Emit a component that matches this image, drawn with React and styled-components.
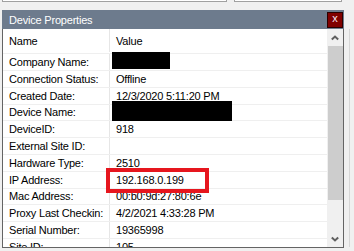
import React from "react";
import styled, { createGlobalStyle } from "styled-components";

const GlobalStyle = createGlobalStyle`
  html, body { margin: 0; padding: 0; background: #f0f0f0; }
  body {
    font-family: "Liberation Sans", Arial, sans-serif;
    font-size: 11px;
    letter-spacing: -0.2px;
    color: #000;
    overflow: hidden;
  }
`;

const Page = styled.div`
  width: 354px;
  height: 251px;
  display: flex;
  flex-direction: column;
  overflow: hidden;
`;

const TopStrip = styled.div`
  display: flex;
  gap: 7px;
  padding-left: 2px;
  height: 2px;
`;

const InputStub = styled.div`
  width: ${(p) => p.$w}px;
  height: 2px;
  box-sizing: border-box;
  background: #fff;
  border: 1px solid #a0a0a0;
  border-top: none;
`;

const Main = styled.div`
  display: flex;
  margin-top: 8px;
  padding-left: 2px;
`;

const Panel = styled.div`
  width: 342px;
  height: 238px;
  box-sizing: border-box;
  border: 1px solid #646464;
  border-top: none;
  display: flex;
  flex-direction: column;
  background: #fff;
`;

const TitleBar = styled.div`
  height: 19px;
  flex-shrink: 0;
  background: #6d7b8d;
  display: flex;
  align-items: center;
  justify-content: space-between;
  color: #fff;
  padding-left: 6px;
  margin: 0 -1px 0 -1px;
  padding-right: 1px;
`;

const TitleText = styled.span`
  padding-left: 1px;
`;

const CloseButton = styled.div`
  width: 16px;
  height: 16px;
  box-sizing: border-box;
  background: #800000;
  border: 1px solid #2a0000;
  color: #f4e4f2;
  font-size: 11px;
  display: flex;
  align-items: center;
  justify-content: center;
  line-height: 1;
  padding-bottom: 2px;
`;

const Body = styled.div`
  flex: 1;
  display: flex;
  overflow: hidden;
`;

const List = styled.div`
  flex: 1;
  display: flex;
  flex-direction: column;
  overflow: hidden;
`;

const Row = styled.div`
  height: ${(p) => (p.$header ? 25.2 : 16.8)}px;
  flex-shrink: 0;
  box-sizing: border-box;
  border-bottom: 1px solid #efefef;
  display: flex;
  padding-bottom: ${(p) => (p.$header ? 1 : 0)}px;
`;

const NameCell = styled.div`
  width: 107px;
  flex-shrink: 0;
  box-sizing: border-box;
  border-right: 1px solid #e6e6e6;
  padding-left: 6px;
  display: flex;
  align-items: center;
  white-space: nowrap;
  overflow: hidden;
`;

const ValueCell = styled.div`
  flex: 1;
  position: relative;
  padding-left: 6px;
  display: flex;
  align-items: center;
  white-space: nowrap;
`;

const Redaction = styled.div`
  position: absolute;
  left: ${(p) => p.$left}px;
  top: ${(p) => p.$top}px;
  width: ${(p) => p.$w}px;
  height: ${(p) => p.$h}px;
  background: #000;
`;

const Highlight = styled.div`
  position: absolute;
  left: -4px;
  top: -3.8px;
  width: 103px;
  height: 25px;
  box-sizing: border-box;
  border: 4px solid #e6161e;
  z-index: 2;
`;

const Scrollbar = styled.div`
  width: 16px;
  flex-shrink: 0;
  display: flex;
  flex-direction: column;
  background: #f0f0f0;
`;

const ScrollButton = styled.div`
  height: 17px;
  flex-shrink: 0;
  display: flex;
  align-items: center;
  justify-content: center;
`;

const Thumb = styled.div`
  height: 154px;
  flex-shrink: 0;
  margin-left: 1px;
  background: #cdcdcd;
`;

const Track = styled.div`
  flex: 1;
`;

const SideLine = styled.div`
  margin-left: 5px;
  margin-top: 19px;
  height: 218px;
  border-left: 1px solid #d6d6d6;
`;

const Chevron = ({ down }) => (
  <svg width="8" height="6" viewBox="0 0 8 6">
    <polyline
      points={down ? "0.8,1.5 4,4.5 7.2,1.5" : "0.8,4.5 4,1.5 7.2,4.5"}
      fill="none"
      stroke="#606060"
      strokeWidth="2"
    />
  </svg>
);

const rows = [
  { name: "Company Name:", value: "", redact: { left: 2, top: -2.2, w: 58, h: 17 } },
  { name: "Connection Status:", value: "Offline" },
  { name: "Created Date:", value: "12/3/2020 5:11:20 PM" },
  { name: "Device Name:", value: "", redact: { left: 2, top: -3.6, w: 120, h: 20 } },
  { name: "DeviceID:", value: "918" },
  { name: "External Site ID:", value: "" },
  { name: "Hardware Type:", value: "2510" },
  { name: "IP Address:", value: "192.168.0.199", highlight: true },
  { name: "Mac Address:", value: "00:b0:9d:27:80:6e" },
  { name: "Proxy Last Checkin:", value: "4/2/2021 4:33:28 PM" },
  { name: "Serial Number:", value: "19365998" },
  { name: "Site ID:", value: "105" },
];

export default function App() {
  return (
    <Page>
      <GlobalStyle />
      <TopStrip>
        <InputStub $w={225} />
        <InputStub $w={108} />
      </TopStrip>
      <Main>
        <Panel>
          <TitleBar>
            <TitleText>Device Properties</TitleText>
            <CloseButton>x</CloseButton>
          </TitleBar>
          <Body>
            <List>
              <Row $header>
                <NameCell>Name</NameCell>
                <ValueCell>Value</ValueCell>
              </Row>
              {rows.map((r) => (
                <Row key={r.name}>
                  <NameCell>{r.name}</NameCell>
                  <ValueCell>
                    {r.value}
                    {r.redact && (
                      <Redaction
                        $left={r.redact.left}
                        $top={r.redact.top}
                        $w={r.redact.w}
                        $h={r.redact.h}
                      />
                    )}
                    {r.highlight && <Highlight />}
                  </ValueCell>
                </Row>
              ))}
            </List>
            <Scrollbar>
              <ScrollButton>
                <Chevron />
              </ScrollButton>
              <Thumb />
              <Track />
              <ScrollButton>
                <Chevron down />
              </ScrollButton>
            </Scrollbar>
          </Body>
        </Panel>
        <SideLine />
      </Main>
    </Page>
  );
}
